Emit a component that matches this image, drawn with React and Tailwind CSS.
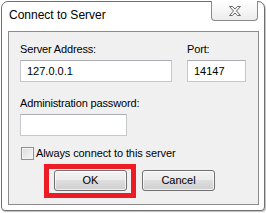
import React from 'react';

const font = { fontFamily: '"Liberation Sans", Arial, sans-serif' };

function TextBox({ width, value }) {
  return (
    <div
      className={`h-[22px] ${width} bg-white border border-[#c6c9cc] border-t-[#abadb3] flex items-center pl-[6px] text-[11px] leading-[13px] text-black`}
    >
      {value}
    </div>
  );
}

function Button({ children }) {
  return (
    <div className="w-[73px] h-[21px] rounded-[3px] border border-[#707070] bg-[linear-gradient(#f2f2f2_0%,#ebebeb_50%,#dddddd_50%,#cfcfcf_100%)] shadow-[inset_0_0_0_1px_rgba(255,255,255,0.7)] flex items-center justify-center text-[11px] leading-[13px] text-black">
      {children}
    </div>
  );
}

export default function App() {
  return (
    <div className="w-[266px] h-[213px] bg-white pl-[1px] pt-[1px]" style={font}>
      <div className="relative w-[264px] h-[210px] border border-[#6f6f6f] rounded-t-[7px] rounded-b-[4px] bg-white px-[6px] pr-[5px] flex flex-col shadow-[1px_1px_1px_rgba(0,0,0,0.25)]">
        <div className="h-[29px] shrink-0 pl-[1px] pt-[6px] text-[12px] leading-[14px] text-black">
          Connect to Server
        </div>

        <div className="absolute top-[-1px] left-[209px] w-[47px] h-[20px] border border-t-0 border-[#8a8a8a] rounded-b-[4px] bg-[linear-gradient(#ffffff,#ececec)] flex items-center justify-center">
          <svg width="12" height="10" viewBox="0 0 12 10">
            <path
              d="M0.5 0.5H3.5L6 3L8.5 0.5H11.5L7.5 5L11.5 9.5H8.5L6 7L3.5 9.5H0.5L4.5 5Z"
              fill="#f4f4f4"
              stroke="#6a6a6a"
              strokeWidth="1"
              strokeLinejoin="round"
            />
          </svg>
        </div>

        <div className="h-[174px] shrink-0 border border-[#8b8b8b] bg-[#f0f0f0] pl-[11px] pt-[11px] flex flex-col">
          <div className="flex gap-[15px]">
            <div className="flex flex-col gap-[4px]">
              <div className="text-[11px] leading-[13px] tracking-[-0.15px] text-black">Server Address:</div>
              <TextBox width="w-[152px]" value="127.0.0.1" />
            </div>
            <div className="flex flex-col gap-[4px]">
              <div className="text-[11px] leading-[13px] tracking-[-0.15px] text-black">Port:</div>
              <TextBox width="w-[59px]" value="14147" />
            </div>
          </div>

          <div className="mt-[15px] flex flex-col gap-[4px]">
            <div className="text-[11px] leading-[13px] tracking-[-0.15px] text-black">Administration password:</div>
            <TextBox width="w-[107px]" value="" />
          </div>

          <div className="mt-[11px] flex items-start gap-[2px] ml-[1px]">
            <div className="w-[13px] h-[13px] border border-[#8e8f8f] bg-[linear-gradient(135deg,#dcdcdc,#f6f6f6)] shadow-[inset_0_0_0_1px_#f4f4f4]" />
            <div className="text-[11px] leading-[13px] tracking-[-0.1px] text-black">Always connect to this server</div>
          </div>

          <div className="mt-[10px] ml-[34px] flex gap-[15px]">
            <div className="relative">
              <Button>OK</Button>
              <div className="absolute left-[-10px] top-[-6px] right-[-9px] bottom-[-7px] border-[5px] border-[#ed1c24]" />
            </div>
            <Button>Cancel</Button>
          </div>
        </div>
      </div>
    </div>
  );
}
